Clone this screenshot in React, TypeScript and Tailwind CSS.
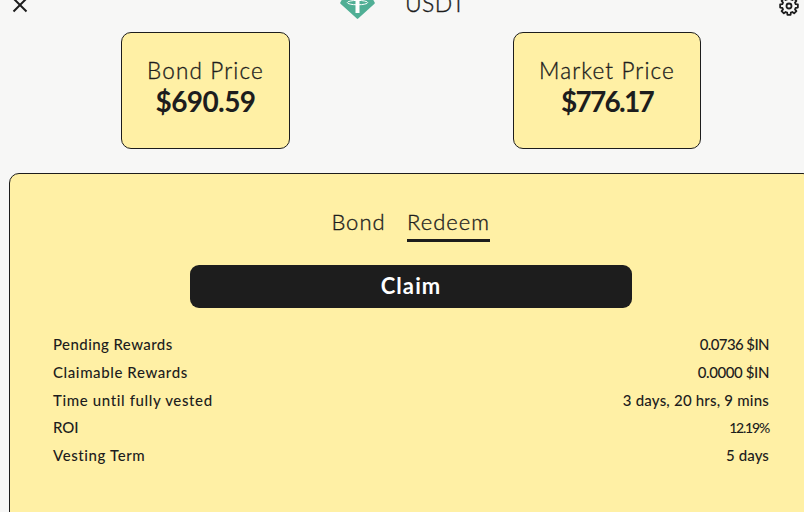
import * as React from 'react';
import clsx from 'clsx';

interface PriceCardProps {
  label: string;
  value: string;
  className?: string;
  valueClassName?: string;
}

interface DetailRow {
  label: string;
  value: string;
  labelClassName?: string;
  valueClassName?: string;
}

const rows: DetailRow[] = [
  {
    label: 'Pending Rewards',
    value: '0.0736 $IN',
    labelClassName: 'tracking-[0.42px]',
    valueClassName: 'tracking-[-0.6px]',
  },
  {
    label: 'Claimable Rewards',
    value: '0.0000 $IN',
    labelClassName: 'tracking-[0.6px]',
    valueClassName: 'tracking-[-0.4px]',
  },
  {
    label: 'Time until fully vested',
    value: '3 days, 20 hrs, 9 mins',
    labelClassName: 'tracking-[0.63px]',
    valueClassName: 'tracking-[0.2px]',
  },
  {
    label: 'ROI',
    value: '12.19%',
    valueClassName: 'text-[14px] tracking-[-1.2px]',
  },
  {
    label: 'Vesting Term',
    value: '5 days',
    labelClassName: 'tracking-[0.6px]',
    valueClassName: 'tracking-[0.1px]',
  },
];

function CloseIcon() {
  return (
    <svg width="16" height="16" viewBox="0 0 16 16" fill="none" stroke="#1d1d1d" strokeWidth="2">
      <path d="M1.5 1.5l13 13M14.5 1.5l-13 13" />
    </svg>
  );
}

function TetherIcon() {
  return (
    <svg width="35" height="30" viewBox="0 0 35 30">
      <path
        d="M7.4.8h20.2a1 1 0 0 1 .9.5l6.2 11.2a1 1 0 0 1-.2 1.2L18.2 28.6a1 1 0 0 1-1.4 0L.5 13.7a1 1 0 0 1-.2-1.2L6.5 1.3a1 1 0 0 1 .9-.5z"
        fill="#50af95"
      />
      <path d="M9.3 5h16.4v3.9h-6.2V23h-4V8.9H9.3z" fill="#fff" />
      <ellipse cx="17.5" cy="12.6" rx="10.2" ry="2.2" fill="none" stroke="#fff" strokeWidth="1" />
    </svg>
  );
}

function GearIcon() {
  return (
    <svg width="24" height="24" viewBox="-12 -12 24 24" fill="none" stroke="#1d1d1d" strokeWidth="1.8" strokeLinejoin="round">
      <path d="M-1.56-8.86H1.56L1.84-6.65 3.4-6.01 5.16-7.37 7.37-5.16 6.01-3.4 6.65-1.84 8.86-1.56V1.56L6.65 1.84 6.01 3.4 7.37 5.16 5.16 7.37 3.4 6.01 1.84 6.65 1.56 8.86H-1.56L-1.84 6.65-3.4 6.01-5.16 7.37-7.37 5.16-6.01 3.4-6.65 1.84-8.86 1.56V-1.56L-6.65-1.84-6.01-3.4-7.37-5.16-5.16-7.37-3.4-6.01-1.84-6.65z" />
      <circle r="2.5" />
    </svg>
  );
}

function PriceCard({ label, value, className, valueClassName }: PriceCardProps) {
  return (
    <div
      className={clsx(
        'flex h-[117px] flex-col items-center rounded-[10px] border border-[#1d1d1d] bg-[#fff0a5] pt-[22px]',
        className,
      )}
    >
      <span className="text-[22.5px] leading-[31px] font-light tracking-[1.15px] [-webkit-text-stroke:0.35px_#1d1d1d]">
        {label}
      </span>
      <span className={clsx('text-[28px] leading-[30px] font-bold', valueClassName)}>{value}</span>
    </div>
  );
}

export default function App() {
  return (
    <div className="h-[512px] w-[804px] overflow-hidden bg-[#f7f7f6] font-['Lato','Liberation_Sans',sans-serif] whitespace-nowrap text-[#1d1d1d]">
      {/* Header */}
      <header className="-mt-[22px] flex h-[54px] items-center pr-[3px] pl-[12px]">
        <CloseIcon />
        <div className="ml-[312px] flex items-center gap-[30px]">
          <TetherIcon />
          <span className="pb-[4px] text-[23px] leading-[30px] font-light tracking-[0.4px] [-webkit-text-stroke:0.35px_#1d1d1d]">
            USDT
          </span>
        </div>
        <div className="ml-auto pt-px">
          <GearIcon />
        </div>
      </header>

      {/* Prices */}
      <section className="flex gap-[223px] pl-[121px]">
        <PriceCard label="Bond Price" value="$690.59" className="w-[169px]" valueClassName="tracking-[-0.6px]" />
        <PriceCard label="Market Price" value="$776.17" className="w-[188px]" valueClassName="tracking-[-1.7px]" />
      </section>

      {/* Bond panel */}
      <main className="mt-[24px] ml-[9px] flex h-[380px] w-[804px] flex-col items-center rounded-[10px] border border-[#1d1d1d] bg-[#fff0a5] px-[43px] pt-[32px]">
        <nav className="flex gap-[22px] text-[22px] leading-[32px] font-light tracking-[1px] [-webkit-text-stroke:0.35px_#1d1d1d]">
          <button className="flex h-[36px] w-[53px] justify-center">Bond</button>
          <button className="flex h-[36px] w-[83px] justify-center border-b-[3px] border-[#1d1d1d]">Redeem</button>
        </nav>
        <button className="mt-[23px] h-[43px] w-[442px] shrink-0 rounded-[9px] bg-[#1d1d1d] pb-[2px] text-[22px] leading-[41px] font-bold tracking-[1.1px] text-white">
          Claim
        </button>
        <dl className="mt-[23px] w-full text-[15px] leading-[27.75px] font-medium">
          {rows.map((row) => (
            <div key={row.label} className="flex justify-between">
              <dt className={row.labelClassName}>{row.label}</dt>
              <dd className={row.valueClassName}>{row.value}</dd>
            </div>
          ))}
        </dl>
      </main>
    </div>
  );
}
